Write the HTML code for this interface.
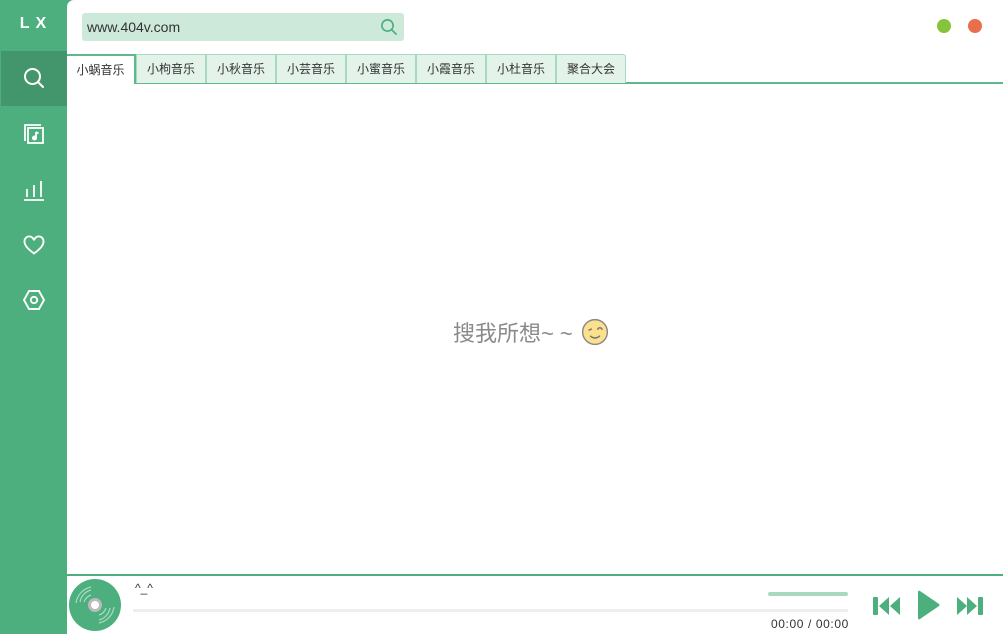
<!DOCTYPE html>
<html><head><meta charset="utf-8"><style>
*{margin:0;padding:0;box-sizing:border-box}
body{width:1003px;height:634px;background:#4caf7d;font-family:"Liberation Sans","Noto Sans CJK SC",sans-serif;position:relative;overflow:hidden}
.side{position:absolute;left:0;top:0;width:67px;height:634px;background:#4caf7d}
.logo{position:absolute;left:0;top:15px;width:67px;text-align:center;color:#fff;font-weight:bold;font-size:16px;letter-spacing:6px;padding-left:5px}
.act{position:absolute;left:1px;top:51px;width:66px;height:55px;background:#43956b}
.ic{position:absolute;left:22px;width:24px;height:24px}
.main{position:absolute;left:67px;top:0;width:936px;height:634px;background:#fff;border-top-left-radius:7px}
.search{position:absolute;left:15px;top:13px;width:322px;height:28px;background:#cde9da;border-radius:3px;font-size:14px;color:#333;line-height:28px;padding-left:5px}
.dot{position:absolute;top:19px;width:14px;height:14px;border-radius:50%}
.tabs{position:absolute;left:0;top:54px;width:936px;height:30px;border-bottom:2px solid #5db88a}
.tab{position:absolute;top:0;height:29px;width:70px;background:#e3f3ea;border:1px solid #a6d9bf;border-bottom:none;font-size:12px;color:#333;text-align:center;line-height:29px}
.tab.a{background:#fff;border:2px solid #5db88a;border-bottom:none;border-left:none;height:30px;line-height:29px;z-index:2}
.empty{position:absolute;left:386px;top:316px;font-size:22px;color:#8a8a8a;white-space:nowrap}
.foot{position:absolute;left:0;top:574px;width:936px;height:60px;border-top:2px solid #4caf7d}
</style></head><body>
<div class="side">
<div class="logo">LX</div>
<div class="act"></div>
<svg class="ic" style="top:66px" viewBox="0 0 24 24" fill="none" stroke="#fff" stroke-width="2"><circle cx="10.5" cy="10.5" r="7.5"/><path d="M16 16l5 5" stroke-linecap="round"/></svg>
<svg class="ic" style="top:122px" viewBox="0 0 24 24" fill="none" stroke="#fff" stroke-width="1.8"><path d="M3 19V3h16"/><rect x="6" y="6" width="15" height="15"/><path d="M14 10v6" /><circle cx="12.5" cy="16" r="1.6" fill="#fff"/><path d="M14 10l2.5 1.5"/></svg>
<svg class="ic" style="top:178px" viewBox="0 0 24 24" fill="none" stroke="#fff" stroke-width="1.8"><path d="M2 22h20M5 11v8M12 7v12M19 3v16"/></svg>
<svg class="ic" style="top:233px" viewBox="0 0 24 24" fill="none" stroke="#fff" stroke-width="1.9"><path d="M12 20.5C6 16 2.5 12.5 2.5 8.5a4.8 4.8 0 0 1 9.5-1.2 4.8 4.8 0 0 1 9.5 1.2c0 4-3.5 7.5-9.5 12z"/></svg>
<svg class="ic" style="top:288px" viewBox="0 0 24 24" fill="none" stroke="#fff" stroke-width="1.9"><path d="M7 3h10l5 9-5 9H7l-5-9z"/><circle cx="12" cy="12" r="3.2"/></svg>
</div>
<div class="main">
<div class="search">www.404v.com
<svg style="position:absolute;right:6px;top:5px" width="18" height="18" viewBox="0 0 24 24" fill="none" stroke="#4caf7d" stroke-width="2.2"><circle cx="10" cy="10" r="7.5"/><path d="M15.5 15.5l6 6" stroke-linecap="round"/></svg></div>
<div class="dot" style="left:870px;background:#85c43b"></div>
<div class="dot" style="left:901px;background:#ea6e4c"></div>
<div class="tabs">
<div class="tab a" style="left:0;width:69px">小蜗音乐</div>
<div class="tab" style="left:69px">小枸音乐</div>
<div class="tab" style="left:139px">小秋音乐</div>
<div class="tab" style="left:209px">小芸音乐</div>
<div class="tab" style="left:279px">小蜜音乐</div>
<div class="tab" style="left:349px">小霞音乐</div>
<div class="tab" style="left:419px">小杜音乐</div>
<div class="tab" style="left:489px;border-top-right-radius:3px">聚合大会</div>
</div>
<div class="empty">搜我所想<span style="letter-spacing:6px">~~</span><svg style="vertical-align:-5px;margin-left:2px" width="28" height="28" viewBox="0 0 26 26"><circle cx="13" cy="13" r="11.5" fill="#fbe08d" stroke="#888" stroke-width="1.3"/><path d="M7 11.5l3-1.5M15.5 11a2 2 0 0 1 4 0" stroke="#777" stroke-width="1.4" fill="none"/><path d="M8.5 16.5q4.5 4 9 0" stroke="#777" stroke-width="1.4" fill="none"/></svg></div>
<div class="foot">
<svg style="position:absolute;left:2px;top:3px" width="52" height="52" viewBox="0 0 52 52"><circle cx="26" cy="26" r="26" fill="#4caf7d"/><circle cx="26" cy="26" r="7" fill="#bbb"/><circle cx="26" cy="26" r="4" fill="#fff"/><g fill="none" stroke="#a9dbc1" stroke-width="1.2"><path d="M7 24a19 19 0 0 1 15-16M11 23a15 15 0 0 1 11-12M15 23a11 11 0 0 1 7-7M45 28a19 19 0 0 1-15 16M41 29a15 15 0 0 1-11 12M37 29a11 11 0 0 1-7 7"/></g></svg>
<div style="position:absolute;left:68px;top:5px;font-size:12px;color:#333">^_^</div>
<div style="position:absolute;left:66px;top:33px;width:715px;height:3px;background:#eee"></div>
<div style="position:absolute;left:701px;top:16px;width:80px;height:4px;background:#a8d9bf;border-radius:2px"></div>
<div style="position:absolute;left:704px;top:41px;font-size:12px;color:#333;letter-spacing:0.6px">00:00 / 00:00</div>
<svg style="position:absolute;left:805px;top:18px" width="30" height="24" viewBox="0 0 30 24" fill="#4caf7d"><rect x="1" y="3" width="5" height="18" rx="1"/><path d="M17 3L7 12l10 9zM28 3L18 12l10 9z"/></svg>
<svg style="position:absolute;left:848px;top:14px" width="26" height="30" viewBox="0 0 26 30" fill="#4caf7d"><path d="M3 2q0-2 2-1l19 13q1 1 0 2L5 29q-2 1-2-1z"/></svg>
<svg style="position:absolute;left:888px;top:18px" width="30" height="24" viewBox="0 0 30 24" fill="#4caf7d"><path d="M2 3l10 9-10 9zM12 3l10 9-10 9z"/><rect x="23" y="3" width="5" height="18" rx="1"/></svg>
</div>
</div>
</body></html>
